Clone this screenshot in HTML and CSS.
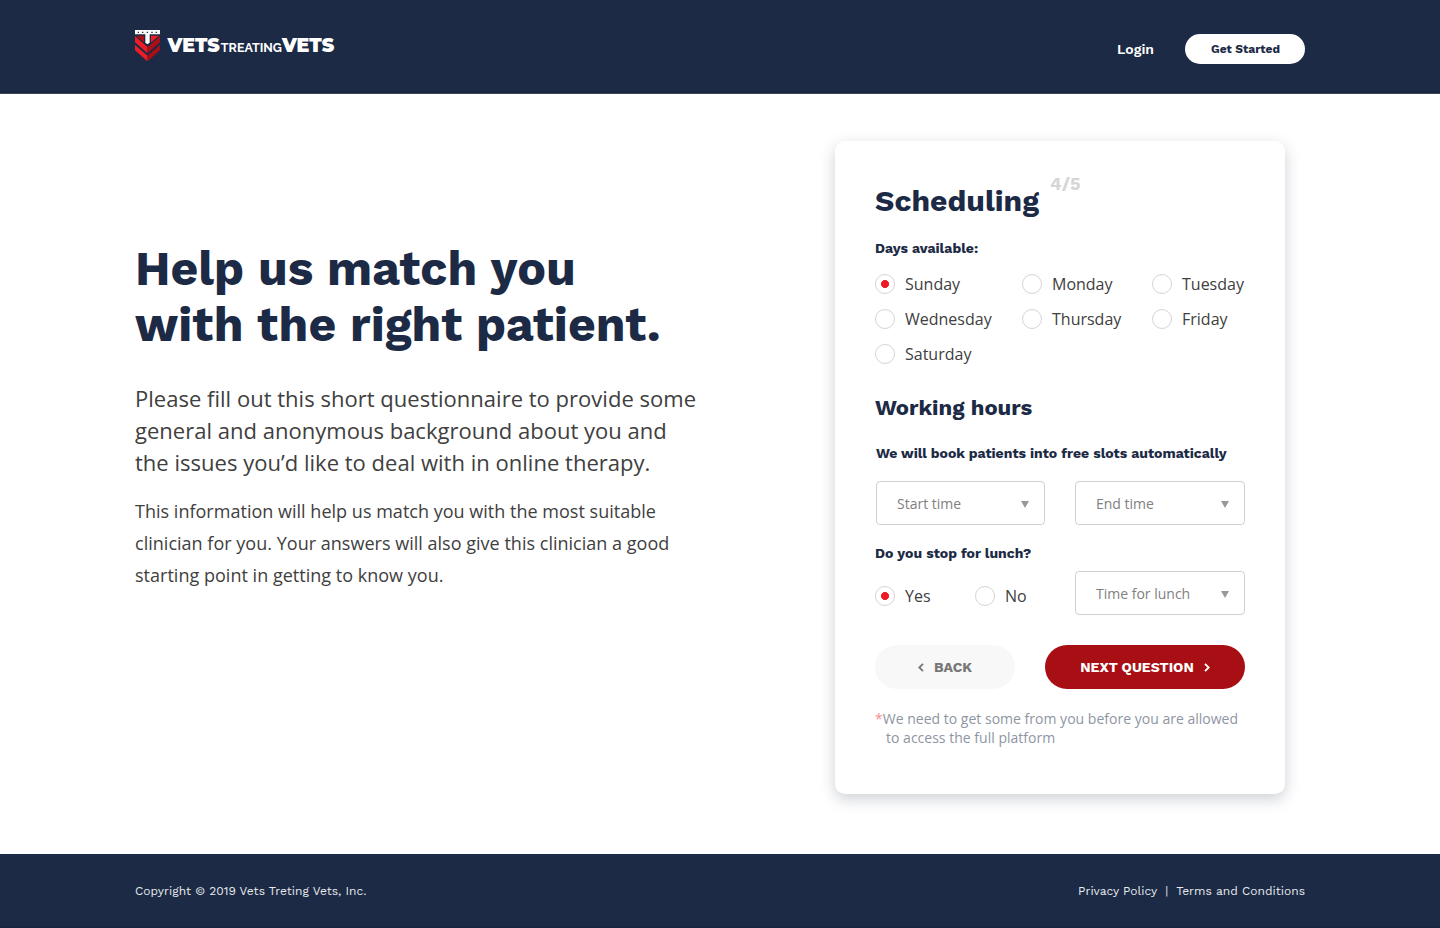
FILE: index.html
```html
<!DOCTYPE html>
<html lang="en">
<head>
<meta charset="utf-8">
<title>Vets Treating Vets</title>
<link rel="stylesheet" href="styles.css">
</head>
<body>
<header class="header">
  <a class="logo">
    <svg class="logo-mark" viewBox="0 0 75 94" width="25" height="31.3">
      <path fill="#a80f17" d="M3 17H28V38Z"/>
      <path fill="#ee1c25" d="M72 17H47V38Z"/>
      <path fill="#ee1c25" d="M0 19L37.500 51V70L0 37Z"/>
      <path fill="#a80f17" d="M75 19L37.500 51V70L75 37Z"/>
      <path fill="#ee1c25" d="M0 45L37.500 77V94L0 61Z"/>
      <path fill="#a80f17" d="M75 45L37.500 77V94L75 61Z"/>
      <path fill="#1c2a45" d="M27 12H48V40L37.500 48L27 40Z"/>
      <path fill="#fff" d="M0 0H75V13H44V38L37.500 43L31 38V13H0Z"/>
      <path fill="#1c2a45" d="M8 5h4v4h-4zM21 5h4v4h-4zM35 5h4v4h-4zM49 5h4v4h-4zM62 5h4v4h-4z"/>
    </svg>
    <span class="logo-text"><b class="logo-vets">VETS</b><span class="logo-treating">TREATING</span><b class="logo-vets">VETS</b></span>
  </a>
  <nav class="nav">
    <a class="login">Login</a>
    <a class="get-started">Get Started</a>
  </nav>
</header>

<main class="main">
  <section class="intro">
    <h1 class="title">Help us match you<br>with the right patient.</h1>
    <p class="lead">Please fill out this short questionnaire to provide some<br>general and anonymous background about you and<br>the issues you’d like to deal with in online therapy.</p>
    <p class="details">This information will help us match you with the most suitable<br>clinician for you. Your answers will also give this clinician a good<br>starting point in getting to know you.</p>
  </section>

  <section class="card">
    <div class="card-head">
      <h2 class="card-title">Scheduling</h2>
      <span class="step">4/5</span>
    </div>
    <h4 class="label label-short">Days available:</h4>
    <div class="days">
      <label class="radio"><i class="dot dot-on"></i>Sunday</label>
      <label class="radio"><i class="dot"></i>Monday</label>
      <label class="radio"><i class="dot"></i>Tuesday</label>
      <label class="radio"><i class="dot"></i>Wednesday</label>
      <label class="radio"><i class="dot"></i>Thursday</label>
      <label class="radio"><i class="dot"></i>Friday</label>
      <label class="radio"><i class="dot"></i>Saturday</label>
    </div>
    <h3 class="subtitle">Working hours</h3>
    <h4 class="label label-slots">We will book patients into free slots automatically</h4>
    <div class="hours">
      <div class="select select-start">Start time<svg class="caret" viewBox="0 0 8 7"><path d="M0 0H8L4 7Z"/></svg></div>
      <div class="select">End time<svg class="caret" viewBox="0 0 8 7"><path d="M0 0H8L4 7Z"/></svg></div>
    </div>
    <h4 class="label">Do you stop for lunch?</h4>
    <div class="lunch">
      <div class="lunch-options">
        <label class="radio"><i class="dot dot-on"></i>Yes</label>
        <label class="radio"><i class="dot"></i>No</label>
      </div>
      <div class="select">Time for lunch<svg class="caret" viewBox="0 0 8 7"><path d="M0 0H8L4 7Z"/></svg></div>
    </div>
    <div class="actions">
      <a class="btn btn-back"><svg class="chevron" viewBox="0 0 6 9"><path d="M5 .8L1.300 4.500L5 8.200"/></svg>BACK</a>
      <a class="btn btn-next">NEXT QUESTION<svg class="chevron" viewBox="0 0 6 9"><path d="M1 .8L4.700 4.500L1 8.200"/></svg></a>
    </div>
    <p class="note"><span class="star">*</span>We need to get some from you before you are allowed<br><span class="note-second">to access the full platform</span></p>
  </section>
</main>

<footer class="footer">
  <span>Copyright © 2019 Vets Treting Vets, Inc.</span>
  <div class="legal"><a>Privacy Policy</a><span>|</span><a>Terms and Conditions</a></div>
</footer>
</body>
</html>
```
FILE: styles.css
```css
* { box-sizing: border-box; }

body {
  margin: 0;
  min-height: 928px;
  display: flex;
  flex-direction: column;
  background: #fff;
  color: #404040;
  font-family: "Open Sans", "Noto Sans", sans-serif;
  white-space: nowrap;
}

h1, h2, h3, h4, p { margin: 0; }

h1, h2, h3, h4, .step, .nav, .btn, .footer {
  font-family: "Work Sans", Inter, sans-serif;
}

h1, h2, h3, h4 { color: #1c2a45; font-weight: 700; }

/* Header */
.header {
  height: 94px;
  padding: 0 135px;
  display: flex;
  justify-content: space-between;
  align-items: flex-start;
  background: #1c2a45;
  border-bottom: 1px solid #39445c;
  box-shadow: inset 0 -2px #1a2540;
}
.logo { display: flex; padding-top: 30px; }
.logo-mark { display: block; }
.logo-text {
  display: flex;
  align-items: baseline;
  margin: 6px 0 0 7.500px;
  color: #fff;
  line-height: 20px;
}
.logo-vets { font: 900 19px/20px Montserrat, Raleway, Inter, sans-serif; }
.logo-treating { margin-left: 1px; font: 700 12.500px/20px Raleway, Lato, sans-serif; }
.nav { display: flex; align-items: center; padding-top: 34px; }
.login { color: #fff; font-size: 14px; font-weight: 600; margin-right: 31px; }
.get-started {
  width: 120px;
  height: 30px;
  padding-left: 1px;
  border-radius: 15px;
  background: #fff;
  color: #1c2a45;
  font-size: 12px;
  font-weight: 700;
  line-height: 30px;
  text-align: center;
}

/* Main */
.main {
  flex: 1;
  padding: 47px 155px 60px 135px;
  display: flex;
  justify-content: space-between;
  align-items: flex-start;
}
.intro { padding-top: 100px; }
.title { font-size: 48px; line-height: 56px; letter-spacing: 0.040px; }
.lead { margin-top: 29px; font-size: 22px; line-height: 32px; letter-spacing: 0.017px; }
.details { margin-top: 17px; font-size: 18px; line-height: 32px; letter-spacing: 0.017px; }

/* Card */
.card {
  width: 450px;
  height: 653px;
  padding: 40px 40px 0;
  border-radius: 10px;
  background: #fff;
  box-shadow: 0 5px 15px rgba(28, 42, 69, 0.22);
}
.card-head { display: flex; height: 40px; }
.card-title { font-size: 30px; line-height: 40px; letter-spacing: 0.040px; }
.step {
  margin: -7px 0 0 11px;
  color: #d6d6d6;
  font-size: 18px;
  font-weight: 700;
  line-height: 20px;
}
.label { font-size: 14px; line-height: 20px; letter-spacing: 0.010px; }
.label-short { margin-top: 17px; }
.label-slots { margin: 20px 0 0 1px; }
.days {
  margin-top: 16px;
  display: grid;
  grid-template-columns: 147px 130px 93px;
  row-gap: 15px;
}
.radio { display: flex; align-items: center; gap: 10px; font-size: 16px; line-height: 20px; }
.dot { width: 20px; height: 20px; border: 1px solid #d4d4d4; border-radius: 50%; }
.dot-on { background: radial-gradient(circle, #ee1c25 3.700px, #fff 4.300px); }
.subtitle { margin-top: 29px; font-size: 22px; line-height: 30px; }
.hours { margin: 18px 0; display: flex; justify-content: space-between; }
.select {
  width: 170px;
  height: 44px;
  padding: 0 15px 0 20px;
  display: flex;
  align-items: center;
  justify-content: space-between;
  border: 1px solid #d0d0d0;
  border-radius: 4px;
  color: #808080;
  font-size: 14px;
}
.select-start { width: 169px; margin-left: 1px; }
.caret { width: 8px; height: 7px; margin-top: 2px; fill: #999; }
.lunch { margin-top: 8px; display: flex; justify-content: space-between; }
.lunch-options { display: grid; grid-template-columns: 100px 60px; padding-top: 15px; align-items: start; }
.actions { margin-top: 30px; display: flex; justify-content: space-between; }
.btn {
  height: 44px;
  display: flex;
  align-items: center;
  justify-content: center;
  gap: 10px;
  border-radius: 22px;
  font-size: 14px;
  font-weight: 700;
}
.btn-back { width: 140px; background: #f8f8f8; color: #777; }
.btn-next { width: 200px; background: #a80f14; color: #fff; }
.chevron { width: 6px; height: 9px; fill: none; stroke: currentColor; stroke-width: 1.800; }
.note { margin-top: 20px; color: #8e95a2; font-size: 14px; line-height: 19px; letter-spacing: 0.012px; }
.star { color: #f68e92; }
.note-second { padding-left: 11px; }

/* Footer */
.footer {
  height: 74px;
  padding: 0 135px;
  display: flex;
  justify-content: space-between;
  align-items: center;
  background: #1c2a45;
  box-shadow: inset 0 -2px #1a2540;
  color: #e8eaed;
  font-size: 12px;
  letter-spacing: 0.030px;
}
.legal { display: flex; gap: 8px; }
```
